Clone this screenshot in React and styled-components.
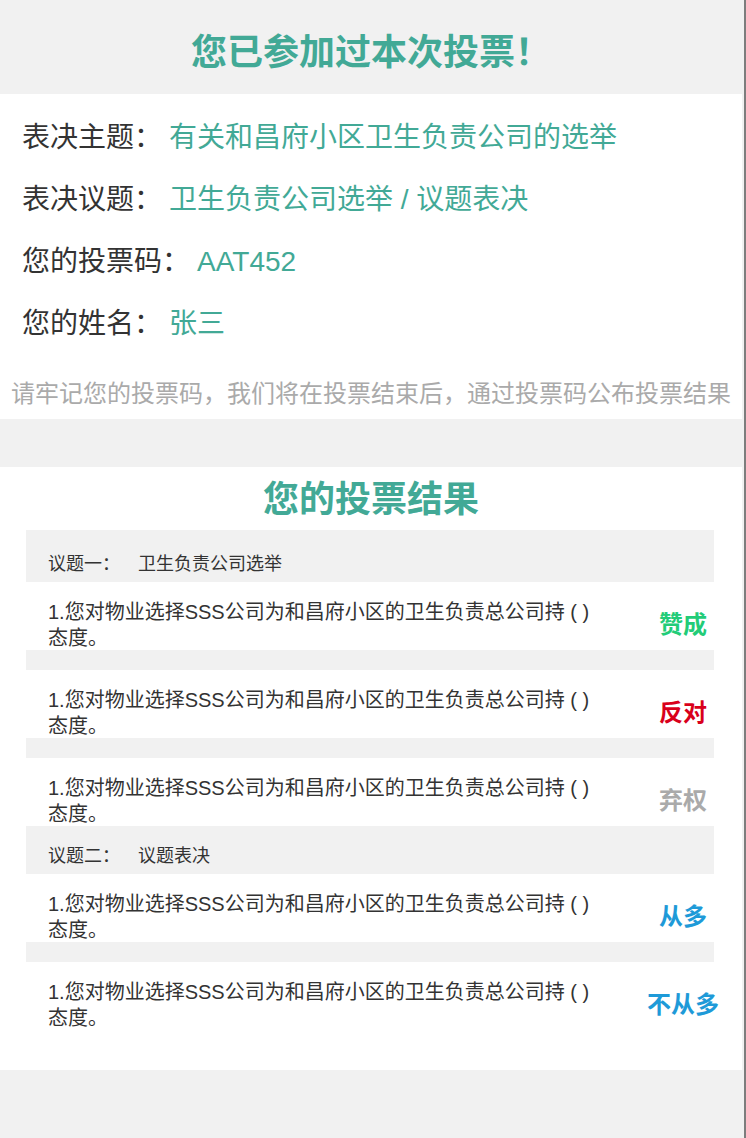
import React from "react";
import styled, { createGlobalStyle } from "styled-components";

const teal = "#42a996";

const info = [
  { label: "表决主题：", value: "有关和昌府小区卫生负责公司的选举" },
  { label: "表决议题：", value: "卫生负责公司选举 / 议题表决" },
  { label: "您的投票码：", value: "AAT452" },
  { label: "您的姓名：", value: "张三" },
];

const question = "1.您对物业选择SSS公司为和昌府小区的卫生负责总公司持 (\u00a0) 态度。";

const topics = [
  {
    name: "议题一：",
    title: "卫生负责公司选举",
    votes: [
      { text: "赞成", color: "#22cc78" },
      { text: "反对", color: "#d9001b" },
      { text: "弃权", color: "#aaaaaa" },
    ],
  },
  {
    name: "议题二：",
    title: "议题表决",
    votes: [
      { text: "从多", color: "#1e9ad8" },
      { text: "不从多", color: "#1e9ad8" },
    ],
  },
];

class App extends React.Component {
  render = () => (
    <Page>
      <GlobalStyle />
      <TopBar>
        <Heading>您已参加过本次投票！</Heading>
      </TopBar>

      <InfoCard>
        {info.map((row) => (
          <InfoRow key={row.label}>
            <InfoLabel>{row.label}</InfoLabel>
            <InfoValue>{row.value}</InfoValue>
          </InfoRow>
        ))}
        <Note>请牢记您的投票码，我们将在投票结束后，通过投票码公布投票结果</Note>
      </InfoCard>

      <ResultCard>
        <ResultHeading>您的投票结果</ResultHeading>
        <List>
          {topics.map((topic) => (
            <React.Fragment key={topic.name}>
              <TopicHeader>
                <span>{topic.name}</span>
                <TopicTitle>{topic.title}</TopicTitle>
              </TopicHeader>
              {topic.votes.map((vote, i) => (
                <Item key={i}>
                  <Question>{question}</Question>
                  <Vote color={vote.color}>{vote.text}</Vote>
                </Item>
              ))}
            </React.Fragment>
          ))}
        </List>
      </ResultCard>
    </Page>
  );
}

const GlobalStyle = createGlobalStyle`
  body {
    margin: 0;
    background: #f1f1f1;
    font-family: "Liberation Sans", "Noto Sans CJK SC", sans-serif;
  }
`;

const Page = styled.div`
  width: 746px;
  min-height: 100vh;
  box-sizing: border-box;
  padding-right: 2px;
  border-right: 2px solid #7d7d7d;
  background: #f1f1f1;
`;

const TopBar = styled.div`
  height: 94px;
  padding-top: 12px;
  box-sizing: border-box;
  text-align: center;
`;

const Heading = styled.h1`
  margin: 0;
  line-height: 82px;
  font-size: 36px;
  font-weight: bold;
  color: ${teal};
`;

const InfoCard = styled.div`
  background: #fff;
  padding: 13px 0 5px;
`;

const InfoRow = styled.div`
  display: flex;
  align-items: center;
  padding-left: 22px;
  line-height: 62px;
  font-size: 28px;
`;

const InfoLabel = styled.span`
  color: #333;
`;

const InfoValue = styled.span`
  color: ${teal};
  margin-left: 7px;
`;

const Note = styled.p`
  margin: 19px 0 0;
  line-height: 40px;
  font-size: 24px;
  color: #aaa;
  text-align: center;
  white-space: nowrap;
`;

const ResultCard = styled.div`
  margin-top: 48px;
  background: #fff;
  padding-bottom: 40px;
`;

const ResultHeading = styled.h2`
  margin: 0;
  padding-top: 2px;
  line-height: 61px;
  font-size: 36px;
  font-weight: bold;
  text-align: center;
  color: ${teal};
`;

const List = styled.div`
  margin: 0 28px 0 26px;
  border-top: 4px solid #f1f1f1;
`;

const TopicHeader = styled.div`
  display: flex;
  background: #f1f1f1;
  padding: 18px 0 6px 22px;
  line-height: 24px;
  font-size: 18px;
  color: #333;
`;

const TopicTitle = styled.span`
  margin-left: 18px;
`;

const Item = styled.div`
  display: flex;
  align-items: center;
  height: 68px;
  box-sizing: border-box;
  padding: 18px 0 0 22px;

  & + & {
    height: 88px;
    border-top: 20px solid #f1f1f1;
  }
`;

const Question = styled.div`
  flex: 1;
  max-width: 556px;
  line-height: 26px;
  font-size: 20px;
  color: #333;
`;

const Vote = styled.div`
  margin: 0 0 6px auto;
  width: 62px;
  display: flex;
  justify-content: center;
  white-space: nowrap;
  font-size: 24px;
  font-weight: bold;
  color: ${(p) => p.color};
`;

export default App;
